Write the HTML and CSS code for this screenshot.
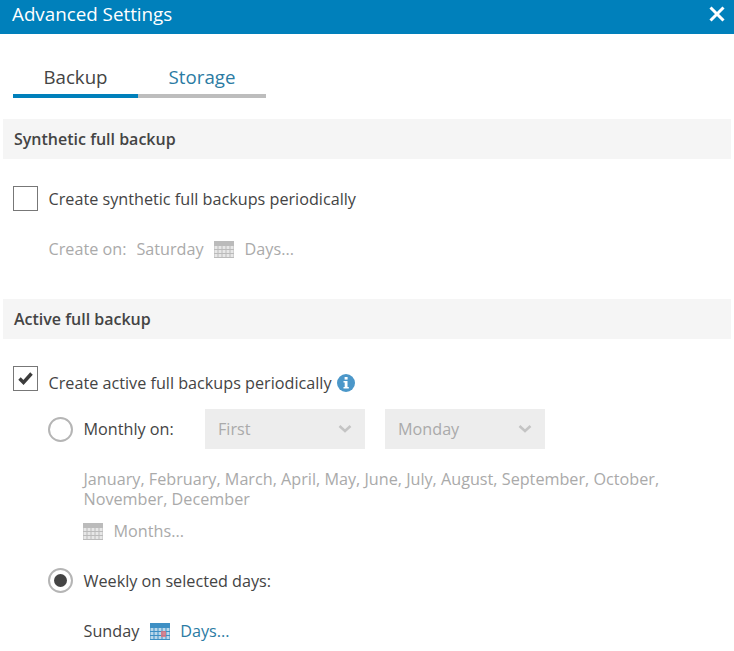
FILE: index.html
```html
<!DOCTYPE html>
<html lang="en">
<head>
    <meta charset="UTF-8">
    <title>Advanced Settings</title>
    <link rel="stylesheet" href="styles.css">
</head>
<body>
    <svg class="defs" width="0" height="0">
        <defs>
            <pattern id="cal-grid" width="4" height="4" patternUnits="userSpaceOnUse">
                <rect width="3" height="3" x="0.5" y="1" fill="#fff" fill-opacity="0.65"/>
            </pattern>
        </defs>
    </svg>
    <header class="titlebar">
        <span class="title">Advanced Settings</span>
        <svg class="close" width="16" height="16" viewBox="0 0 16 16">
            <path d="M1.5 1.5L14.5 14.5M14.5 1.5L1.5 14.5" stroke="#fff" stroke-width="3"/>
        </svg>
    </header>

    <nav class="tabs">
        <div class="tab active">Backup</div>
        <div class="tab">Storage</div>
    </nav>

    <section class="group first">
        <h2>Synthetic full backup</h2>
        <div class="check-row">
            <span class="checkbox"></span>
            <span>Create synthetic full backups periodically</span>
        </div>
        <div class="days-row disabled">
            <span>Create on:</span>
            <span class="day">Saturday</span>
            <svg class="cal" width="20" height="17" viewBox="0 0 20 17">
                <rect width="20" height="17" fill="#bbb"/>
                <rect y="4" x="0" width="20" height="12" fill="url(#cal-grid)"/>
            </svg>
            <span>Days...</span>
        </div>
    </section>

    <section class="group">
        <h2>Active full backup</h2>
        <div class="check-row active-check">
            <span class="checkbox">
                <svg width="23" height="23" viewBox="0 0 23 23">
                    <path d="M5.5 11.5L9.5 15.5L17.5 6.5" fill="none" stroke="#3c3c3c" stroke-width="3.4"/>
                </svg>
            </span>
            <span>Create active full backups periodically</span>
            <svg class="info" width="18" height="18" viewBox="0 0 18 18">
                <circle cx="9" cy="9" r="9" fill="#4b97c9"/>
                <rect x="7.6" y="3" width="3" height="2.6" fill="#fff"/>
                <path d="M6.5 7h4v6h1.3v1.6H6.5V13h1.2V8.6H6.5z" fill="#fff"/>
            </svg>
        </div>

        <div class="radio-row monthly">
            <span class="radio"></span>
            <span class="radio-label">Monthly on:</span>
            <div class="select">
                <span>First</span>
                <svg width="14" height="8" viewBox="0 0 14 8"><path d="M1.5 1L7 6L12.5 1" fill="none" stroke="#c4c4c4" stroke-width="2.5"/></svg>
            </div>
            <div class="select">
                <span>Monday</span>
                <svg width="14" height="8" viewBox="0 0 14 8"><path d="M1.5 1L7 6L12.5 1" fill="none" stroke="#c4c4c4" stroke-width="2.5"/></svg>
            </div>
        </div>
        <p class="months disabled">January, February, March, April, May, June, July, August, September, October, November, December</p>
        <div class="months-link disabled">
            <svg class="cal" width="20" height="17" viewBox="0 0 20 17">
                <rect width="20" height="17" fill="#bbb"/>
                <rect y="4" x="0" width="20" height="12" fill="url(#cal-grid)"/>
            </svg>
            <span>Months...</span>
        </div>

        <div class="radio-row weekly">
            <span class="radio on"></span>
            <span class="radio-label">Weekly on selected days:</span>
        </div>
        <div class="days-row sunday">
            <span>Sunday</span>
            <svg class="cal" width="20" height="17" viewBox="0 0 20 17">
                <rect width="20" height="17" fill="#3d8fc4"/>
                <rect y="4" x="0" width="20" height="12" fill="url(#cal-grid)"/>
                <rect x="11" y="8" width="5" height="6" fill="#e0707a" fill-opacity="0.8"/>
            </svg>
            <a>Days...</a>
        </div>
    </section>
</body>
</html>
```

FILE: styles.css
```css
html, body {
    height: 651px;
    overflow: hidden;
}
body {
    margin: 0;
    background-color: #fff;
    font-family: "Open Sans", sans-serif;
    font-size: 16.2px;
    line-height: 20px;
    color: #444;
}
.defs {
    position: absolute;
}
.titlebar {
    height: 34px;
    background-color: #0080bb;
    color: #fff;
    display: flex;
    align-items: center;
    justify-content: space-between;
    padding: 0 9px 0 12px;
}
.title {
    font-size: 18.8px;
    position: relative;
    top: -3px;
}
.close {
    position: relative;
    top: -3px;
}
.tabs {
    display: flex;
    margin: 27px 0 0 13px;
}
.tab {
    width: 128px;
    height: 33px;
    font-size: 18.7px;
    line-height: 32px;
    text-align: center;
    color: #2b7ba3;
    border-bottom: 4px solid #bdbdbd;
}
.tab.active {
    width: 125px;
    color: #444;
    border-bottom-color: #0080bb;
}
h2 {
    margin: 0 3px;
    height: 40px;
    padding-left: 11px;
    background-color: #f5f5f5;
    font-size: 16px;
    font-weight: 600;
    line-height: 40px;
}
.group {
    margin-top: 40px;
}
.group.first {
    margin-top: 21px;
}
.check-row {
    display: flex;
    align-items: center;
    gap: 10.5px;
    margin: 27px 0 0 13px;
    height: 25px;
}
.active-check span:nth-child(2) {
    position: relative;
    top: 4px;
}
.checkbox {
    width: 25px;
    height: 25px;
    box-sizing: border-box;
    border: 1px solid #777;
    display: block;
    background-color: #fff;
}
.checkbox svg {
    display: block;
}
.info {
    margin: 8px 0 0 -5px;
}
.disabled {
    color: #aaa;
}
.days-row {
    display: flex;
    align-items: center;
    margin: 28px 0 0 48.5px;
    height: 20px;
}
.day {
    margin-left: 10px;
}
.cal {
    margin: 0 10.5px;
}
.radio-row {
    display: flex;
    align-items: center;
}
.monthly {
    margin: 18px 0 0 48px;
    height: 40px;
}
.radio {
    width: 25px;
    height: 25px;
    box-sizing: border-box;
    border: 2px solid #b5b5b5;
    border-radius: 50%;
    background-color: #fff;
    display: flex;
    align-items: center;
    justify-content: center;
}
.radio.on::after {
    content: "";
    width: 13px;
    height: 13px;
    border-radius: 50%;
    background-color: #444;
}
.radio-label {
    margin-left: 10.5px;
}
.monthly .radio-label {
    width: 121.5px;
}
.select {
    width: 160px;
    height: 40px;
    box-sizing: border-box;
    padding: 0 13px;
    margin-right: 20px;
    background-color: #ededed;
    color: #aaa;
    display: flex;
    align-items: center;
    justify-content: space-between;
}
.months {
    margin: 20px 60px 0 83.5px;
}
.months-link {
    display: flex;
    align-items: center;
    margin: 12px 0 0 83px;
    height: 20px;
}
.months-link .cal {
    margin: 0 10.5px 0 0;
}
.weekly {
    margin: 27px 0 0 48px;
    height: 25px;
}
.sunday {
    margin: 28px 0 0 83.5px;
}
.sunday a {
    color: #2b7ba3;
}
```
